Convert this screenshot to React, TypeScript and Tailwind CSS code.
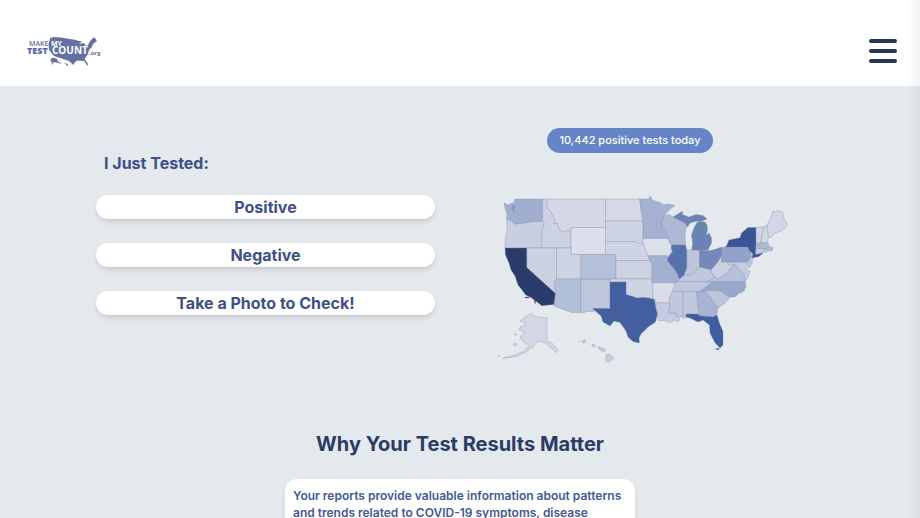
type Region = { id: string; fill: string; d: string };

const states: Region[] = [
  { id: "OR", fill: "#c9cfe2", d: "M506.5 219L511 220.5 515 224 524 223 532 221.5 542.5 221 544.5 223.5 541 232 542 235 541.5 248H505V240L507 231Z" },
  { id: "ID", fill: "#cdd2e3", d: "M542.5 199H547V207L550 211 552.5 215 555 219 554 223.5 557.5 223 559 229 563 232 567 230.5 571 231V248H541.5L542 235 541 232 544.5 223.5 542.5 221Z" },
  { id: "MT", fill: "#d4d8e6", d: "M547 199H605.5V227.5H571V231L567 230.5 563 232 559 229 557.5 223 554 223.5 555 219 552.5 215 550 211 547 207Z" },
  { id: "WA", fill: "#a0aed0", d: "M504 203L508 205 513 202.5 514 205 512 209 513 212 515.5 212 516.5 208 515 204 514 202 515 199H542.5V221L532 221.5 524 223 515 224 511 220.5 506.5 219 507 214 505 208Z" },
  { id: "Puget", fill: "#8d9dc4", d: "M512 208L514 204 515.500 206 515 212 512.500 211Z" },
  { id: "WY", fill: "#dcdfea", d: "M571 227.5H605.5V254.5H571Z" },
  { id: "NV", fill: "#ccd1e2", d: "M526.7 248H556.5V279.5L554 281 555.5 293.5 526.7 267.5Z" },
  { id: "UT", fill: "#cfd4e4", d: "M556.5 248H571V254.5H581V279H556.5Z" },
  { id: "AZ", fill: "#b2bfd9", d: "M556.5 279H581V312.5H571.5L554 306 555 299 556 294 554 283Z" },
  { id: "NM", fill: "#bec7dc", d: "M581 279H610V309H593L594 311.5H585V312.5H581Z" },
  { id: "CO", fill: "#b4c0d9", d: "M581 254.5H616V279H581Z" },
  { id: "ND", fill: "#d5d9e7", d: "M605.5 199H640L641 210 643 221H605.5Z" },
  { id: "SD", fill: "#cfd4e4", d: "M605.5 221H643V238.5L643.5 244 638 242 633 241.5H605.5Z" },
  { id: "NE", fill: "#cfd4e4", d: "M605.5 241.5H633L637 243 643 244 645 248 648 256 650 260.5H616V254.5H605.5Z" },
  { id: "KS", fill: "#cdd2e3", d: "M616 260.5H650L652 264V279H616Z" },
  { id: "OK", fill: "#cfd4e4", d: "M610 279H652L653 298.5 649 298 643 297.5 637 298 631 296 626 294.5V282H610Z" },
  { id: "LA", fill: "#c5cce0", d: "M655.7 302.7H669L670 306 668 313H676L677 317 680 319 678 322 674 320 670 323 665 320.5 658 320.5 657.5 313Z" },
  { id: "TX", fill: "#435f9f", d: "M610 282H626V294.5L631 296 637 298 643 297.5 649 298 654.5 299.5 656 309 657.5 314 655.5 322 648 327 641 334 639 338 639.5 343 633 341.5 628 337 626 331 620 322.5 614 321 610 326 603 322 601 316 593 309V308.5H610Z" },
  { id: "IA", fill: "#dbe0e9", d: "M643 238.3H668L670 243 673 247 671 252 669 256 647.7 255.7 645 248 643 243Z" },
  { id: "MN", fill: "#a4b1d1", d: "M639.5 199H649L649.7 196 651 197 652 200 660 202.5 664 205 668 204 675 205.5 670 209 666.5 213 664 216 661.7 221.5 662 227 667 233.5 668 238.3H643V221L641 210Z" },
  { id: "WI", fill: "#adb8d4", d: "M664 216L669 214.5 673 217 681 221 685 223 686.5 226 685 234 685.5 245H671.5L670 243 668 238.3 667 233.5 662 227 661.7 221.5Z" },
  { id: "MO", fill: "#a3b1d1", d: "M647.7 255.7H667L668 261.5 673.5 268 677 273 680 278.5 677 283.5 674 282.7H652V264L650 260.5Z" },
  { id: "AR", fill: "#d9dce9", d: "M652.3 282.7H674L675 286 670 296 669 302.7H655.7V299.5L653 298.5Z" },
  { id: "IN", fill: "#bcc5dc", d: "M687 250H699.5V267L695 272 690 275 684 276 686.5 268Z" },
  { id: "KY", fill: "#bfc8dd", d: "M680 278.5L684 275 690 275 695 272 699.5 267 711 269.5 712 274 715 277 709 281.7H677Z" },
  { id: "TN", fill: "#bfc8dd", d: "M676 281.7H712L706 287 700 291.5H672.7Z" },
  { id: "MS", fill: "#bfc8dd", d: "M672.7 291.5H683.3L682.7 317 677 317 676 313H668.5L670 306 669 300Z" },
  { id: "AL", fill: "#bfc8dd", d: "M683.3 291.5H696.7L697.5 303 699 314.5H686.5V318H683Z" },
  { id: "IL", fill: "#5672ac", d: "M671.7 245H685.7L686.7 250V268L684 275 679.5 279 677 273 673.5 268 668 261.5 667.5 258 672.5 251.5 671 248Z" },
  { id: "MI-U", fill: "#6b82b5", d: "M673 217L677 214.5 683 211 682 214.5 689 217 696 214.5 703 215.5 707 219 702 221 695 221.5 690 223 687.5 227 685 223 681 221Z" },
  { id: "MI", fill: "#6b82b5", d: "M696.7 223L699 221.5 705 222 707 225 707.5 230 706 235 709 233 711.5 238V243L708 250H691.7L692.7 243 691.5 235 694 228Z" },
  { id: "OH", fill: "#7389ba", d: "M699.5 250L710 250.7 716 249 721.7 247 722 255 718 262 711.5 269.5 699.5 267Z" },
  { id: "WV", fill: "#ccd1e2", d: "M722 255V262H728L734 264 727 273 718 279 712 274 711.5 269.5 718 262Z" },
  { id: "VA", fill: "#b7c0d9", d: "M734 264L738 268 743 273 746 281.7H706L715 277 718 279 727 273Z" },
  { id: "MD", fill: "#c6cde0", d: "M728 262H745.5L747 270 750 271 748 278 746 280 744 274 738 267 734 264 728 265Z" },
  { id: "NJ", fill: "#bcc5dc", d: "M749 250L753 254 752 263.5 749 268 746.5 263 750 257Z" },
  { id: "PA", fill: "#93a2c9", d: "M721.5 248L726 246.5H748L750 252 751 257 747 262H721.5Z" },
  { id: "NC", fill: "#98a7cc", d: "M712 281.7H745L746 286 744 291 738 294 735 297H729L720 291 711 290.5 700 291.5 706 287Z" },
  { id: "SC", fill: "#bcc5dc", d: "M705 292L711 290.5 720 291 730 297.5 725 303 718 308 710 297Z" },
  { id: "GA", fill: "#a6b3d2", d: "M696.7 291.5H705L710 297 718 308 716.5 315.5 713 317 699 315.5 697.5 303Z" },
  { id: "FL", fill: "#3f5d9f", d: "M686 314H698L699.3 315.7 713 317 717 315 719 322 723 331.7V345L720 348 715 342.7 710 333 709.5 325 703 320 698 322 690 318 686 317ZM715 349L719 348V350Z" },
  { id: "NY", fill: "#3a5597", d: "M726 247L729 240 740 237.7 741.5 233 748 227.5H756V244L755.5 254 763 253 759 256.5 752 258 753 254 749 250 748 247Z" },
  { id: "VT", fill: "#cfd4e4", d: "M756 227.5L764 226.7 762 236 760.5 243H756Z" },
  { id: "NH", fill: "#d2d6e5", d: "M764 226.7L767 225 768.5 237 767 242.5 760.5 243 762 236Z" },
  { id: "ME", fill: "#d2d6e5", d: "M767 225L771 217 773 211 775 212 778 210.5 782.5 212 784.5 220 787.7 225 784 229 780 231.5 775 233 770 238 768.5 237Z" },
  { id: "MA", fill: "#adb8d4", d: "M756 243.5L768 242.5 769 246 773 248 772 251 768 250.5 765 248.5H756Z" },
  { id: "CT", fill: "#c6cde0", d: "M756 248.5H764V252L756 254.5ZM764 248.5H766.5L767 252H764Z" },
  { id: "CA", fill: "#2a3c6b", d: "M505 248H526.7V267.5L555.5 293.5 554.5 299.5 554 304.5 541.7 305.7 536.7 301.7 531.7 298 525.7 295 522 290 518 285 515 276 511 270 509 263 505.5 255ZM525 297H529V298H525ZM534 300L536 301 535 304Z" },
  { id: "AK", fill: "#d2d6e5", d: "M520 321L525 316.7 531 313.7 537 316.7 547 318V341L551.7 342.7 558 350 556.5 352.7 550 347 545 342.7 538 341 533 347 526 352 517 356.5 503 358 513 355.5 523 351.5 529 346 522 341 520 336.7 525 332 519 330 521 326 525 326 524 322ZM513 344L516 343 517 345 514 346ZM514 334L517 335ZM498 356L500 356Z" },
  { id: "HI", fill: "#c5cce0", d: "M582 341L585 340 586 342 583 343ZM579 342L580 342ZM592 344L595 345 595 347 592 346ZM598 347L602 348 606 350 604 352 599 349ZM606 355L609 354 614 358 608 362.5 606 360Z" },
];

function Logo() {
  return (
    <svg viewBox="25 34 80 36" className="h-9 w-20" role="img" aria-label="Make My Test Count .org">
      <path
        fill="#6571a3"
        d="M50.5 38L52 39.5 52.5 38 61 38.5 76 41 77 41.5 82 42.5 79 45 84 44 86 47 88 46 90 42 93 39 95 38.5 96 41 97 42 93 45 92 48 89 51 88 55 86 58 84.5 60 88 65 87.5 67 84 62 78 61.5 75 63 73.5 66 69 62 66 61 60 59 54 57 49 51 48.5 45ZM50 61L53 58.5 57 60 58 62.5 62 65 58 64 54 63 51 66 52 63ZM64 64L68 65 68 67Z"
      />
      <g fontFamily="'Open Sans', 'Noto Sans', sans-serif">
        <text x="29" y="47" fontSize="7" fontWeight="600" fill="#6571a3">MAKE</text>
        <text x="51" y="47" fontSize="7" fontWeight="700" fill="#ffffff">MY</text>
        <text x="27" y="55" fontSize="9" fontWeight="800" fill="#59669b">TEST</text>
        <text x="52" y="55" fontSize="10" fontWeight="700" fill="#ffffff">COUNT</text>
        <text x="89" y="56" fontSize="6" fontWeight="700" fill="#6571a3">.org</text>
      </g>
    </svg>
  );
}

function StatesMap() {
  return (
    <svg viewBox="470 190 320 180" className="w-full" role="img" aria-label="Positive tests by state">
      <g stroke="#7a85a3" strokeOpacity="0.4" strokeWidth="0.8" strokeLinejoin="round">
        {states.map((s) => (
          <path key={s.id} d={s.d} fill={s.fill} />
        ))}
      </g>
    </svg>
  );
}

const answers = ["Positive", "Negative", "Take a Photo to Check!"];

export default function App() {
  return (
    <div className="relative h-screen overflow-hidden bg-[#e4e9ed] font-['Inter',sans-serif]">
      <header className="flex h-[86px] items-center justify-between bg-white pt-4 pr-[23px] pl-[25px]">
        <a href="#home">
          <Logo />
        </a>
        <button type="button" aria-label="Open menu" className="flex flex-col gap-[6px]">
          <span className="h-1 w-7 rounded-full bg-[#273556]" />
          <span className="h-1 w-7 rounded-full bg-[#273556]" />
          <span className="h-1 w-7 rounded-full bg-[#273556]" />
        </button>
      </header>

      <main>
        <section className="grid grid-cols-[339fr_320fr] gap-[35px] pt-[42px] pr-[130px] pl-24">
          <div className="flex flex-col gap-5 pt-[23px]">
            <h2 className="pl-2 text-base leading-6 font-bold text-[#3d5088]">I Just Tested:</h2>
            <div className="flex flex-col gap-6">
              {answers.map((label) => (
                <button
                  key={label}
                  type="button"
                  className="h-6 rounded-full bg-white text-base leading-6 font-bold text-[#3d5088] shadow-md"
                >
                  {label}
                </button>
              ))}
            </div>
          </div>
          <div className="flex flex-col items-center gap-[37px]">
            <p className="rounded-full bg-[#6685c6] px-3 text-[11px] leading-[25px] font-medium text-white">
              10,442 positive tests today
            </p>
            <StatesMap />
          </div>
        </section>

        <section className="flex flex-col items-center gap-[21px] pt-[60px]">
          <h1 className="text-xl leading-7 font-bold text-[#2a3b67]">Why Your Test Results Matter</h1>
          <p className="w-[350px] rounded-xl bg-white px-2 pt-2 pb-4 text-xs leading-[17px] font-semibold text-[#435a96] shadow-md">
            Your reports provide valuable information about patterns and trends related to COVID-19 symptoms, disease
          </p>
        </section>
      </main>

      <div className="pointer-events-none absolute inset-y-0 right-0 w-3 bg-linear-to-r from-transparent to-black/5" />
    </div>
  );
}
